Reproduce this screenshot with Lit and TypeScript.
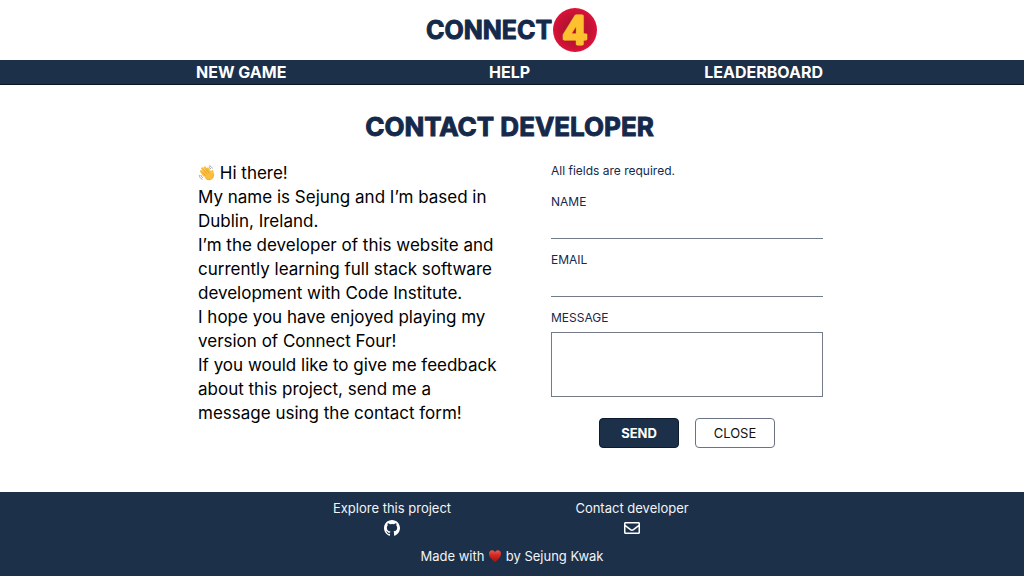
import { LitElement, html, css, svg } from "lit";
import { customElement } from "lit/decorators.js";

const wave = svg`
  <g stroke-linecap="round" stroke-linejoin="round" fill="none">
    <path d="M7 13.2 3.6 8.4M9 11 5 5.2M11.6 9.6 8 4.2M14 9.4 11.4 5.6" stroke="#f9be3c" stroke-width="2.8"/>
    <path d="M5.4 11.6 9.6 7.4 14 9.2 15.4 10.4C15.6 8.6 15.4 7.6 16.4 7.2 17.8 6.8 18.2 8.6 18.4 10.4 18.8 13.4 18.4 15.8 16.4 17.4 14 19.4 11 18.8 9 16.8Z" fill="#f9be3c"/>
    <path d="M8.6 13.6 5.4 9.6M10.4 11.6 7 6.8M12.6 10.4 9.8 6" stroke="#df8f1c" stroke-width=".6"/>
    <path d="M9 16.8C11 18.8 14 19.4 16.4 17.4 18 16 18.5 14.4 18.5 12" stroke="#e89a22" stroke-width=".9"/>
    <path d="M13.4 2.2C15 2.4 16.2 3.4 16.8 4.8M13.2 4.2C14 4.4 14.6 4.8 15 5.6M1.6 13.6C1.8 15.6 3 17.2 4.8 18M3.4 13.4C3.6 14.6 4.4 15.4 5.4 16" stroke="#9a9ea4" stroke-width="1.1"/>
  </g>`;

@customElement("app-root")
export class AppRoot extends LitElement {
  static styles = css`
    :host {
      --navy: #1d3049;
      --ink: #15294b;
      display: flex;
      flex-direction: column;
      min-height: 100vh;
      background: #fff;
      color: #000;
      font-family: Inter, "Open Sans", sans-serif;
      font-size: 17px;
    }
    *, *::before, *::after { box-sizing: border-box; }
    a { color: inherit; text-decoration: none; }
    p, h1 { margin: 0; }
    .header { display: flex; justify-content: center; padding: 8px 0; }
    .logo { display: flex; align-items: center; }
    .logo svg { display: block; overflow: visible; }
    .word, .four { font-family: Inter, sans-serif; stroke-linejoin: round; }
    .word { font-size: 25px; font-weight: 700; fill: var(--ink); stroke: var(--ink); stroke-width: 1px; }
    .four { font-size: 38px; font-weight: 600; fill: #fdc02f; stroke: #fdc02f; stroke-width: 3px; }
    .nav { background: var(--navy); border-bottom: 1px solid #0b1626; color: #fff; }
    .wrap { width: 100%; max-width: 636px; margin: 0 auto; padding: 0 7px 0 2px; }
    .links {
      display: grid;
      grid-template-columns: 1fr 1fr 1fr;
      font-size: 16px;
      font-weight: 700;
      line-height: 24px;
    }
    .links a:nth-child(2) { text-align: center; }
    .links a:nth-child(3) { text-align: right; }
    .main { flex: 1; padding-top: 24px; padding-bottom: 40px; }
    .title {
      color: var(--ink);
      font-size: 26px;
      font-weight: 700;
      line-height: 36px;
      text-align: center;
      -webkit-text-stroke: 1px var(--ink);
      stroke-linejoin: round;
    }
    .columns { display: grid; grid-template-columns: 1fr 272px; gap: 48px; padding-top: 16px; padding-left: 2px; }
    .about { line-height: 24px; }
    .wave { width: 17px; height: 17px; vertical-align: -2px; }
    .form { display: flex; flex-direction: column; color: var(--ink); font-size: 12px; line-height: 20px; }
    .note { margin-bottom: 11px; }
    .form input, .form textarea {
      display: block;
      width: 100%;
      padding: 4px;
      border: 1px solid #737b89;
      border-radius: 0;
      background: #fff;
      font: inherit;
      color: inherit;
      resize: none;
      outline: none;
    }
    .form input { height: 27px; border-width: 0 0 1px; margin-bottom: 11px; }
    .form textarea { height: 65px; margin-top: 4px; }
    .actions { display: flex; justify-content: center; gap: 16px; padding-top: 21px; }
    .btn {
      width: 80px;
      height: 30px;
      padding: 0;
      border: 1px solid #6a7284;
      border-radius: 4px;
      background: #fff;
      color: #111;
      font-family: inherit;
      font-size: 13px;
      cursor: pointer;
    }
    .btn.primary { background: var(--navy); border-color: #0d1b30; color: #fff; font-weight: 700; }
    .footer {
      background: var(--navy);
      color: #f2f4f6;
      font-size: 13px;
      line-height: 20px;
      text-align: center;
      padding: 6px 0 10px;
    }
    .contacts { display: grid; grid-template-columns: 240px 240px; justify-content: center; }
    .contacts a { display: flex; flex-direction: column; align-items: center; }
    .contacts svg { display: block; width: 16px; height: 20px; fill: #fff; }
    .credit { margin-top: 8px; }
    .heart { width: 14px; height: 14px; vertical-align: -2px; }
  `;

  render() {
    return html`
      <header class="header">
        <a class="logo" href="#" aria-label="Connect 4">
          <svg width="170" height="44" viewBox="0 0 170 44">
            <defs>
              <radialGradient id="disc">
                <stop offset="0" stop-color="#a80f2e" />
                <stop offset=".6" stop-color="#bd1233" />
                <stop offset=".82" stop-color="#cc1236" />
                <stop offset="1" stop-color="#de123b" />
              </radialGradient>
            </defs>
            <circle cx="148" cy="22" r="22" fill="url(#disc)" />
            <text class="word" x="-1" y="31">CONNECT</text>
            <text class="four" x="148" y="36" text-anchor="middle">4</text>
          </svg>
        </a>
      </header>
      <nav class="nav">
        <div class="wrap links">
          <a href="#new">NEW GAME</a>
          <a href="#help">HELP</a>
          <a href="#leaderboard">LEADERBOARD</a>
        </div>
      </nav>
      <main class="wrap main">
        <h1 class="title">CONTACT DEVELOPER</h1>
        <div class="columns">
          <section class="about">
            <p><svg class="wave" viewBox="0 0 20 20" role="img" aria-label="Waving hand">${wave}</svg> Hi there!</p>
            <p>My name is Sejung and I’m based in Dublin, Ireland.</p>
            <p>I’m the developer of this website and currently learning full stack software development with Code Institute.</p>
            <p>I hope you have enjoyed playing my version of Connect Four!</p>
            <p>If you would like to give me feedback about this project, send me a message using the contact form!</p>
          </section>
          <form class="form" @submit=${(e: Event) => e.preventDefault()}>
            <p class="note">All fields are required.</p>
            <label for="name">NAME</label>
            <input id="name" type="text" required />
            <label for="email">EMAIL</label>
            <input id="email" type="email" required />
            <label for="message">MESSAGE</label>
            <textarea id="message" required></textarea>
            <div class="actions">
              <button class="btn primary" type="submit">SEND</button>
              <button class="btn" type="button">CLOSE</button>
            </div>
          </form>
        </div>
      </main>
      <footer class="footer">
        <div class="contacts">
          <a href="#project">Explore this project
            <svg viewBox="0 0 496 512">
              <path d="M248 8C111 8 0 119 0 257c0 110 70 203 169 236 13 2 17-6 17-12v-45c-70 15-84-30-84-30-11-29-28-37-28-37-23-16 2-16 2-16 25 2 38 26 38 26 22 38 58 27 73 21 2-16 9-27 16-34-56-6-114-28-114-123 0-27 9-49 25-66-2-6-11-31 3-65 0 0 21-7 69 25a240 240 0 0 1 125 0c48-32 68-25 68-25 14 34 5 59 3 65 16 17 26 39 26 66 0 95-58 116-114 123 9 8 17 23 17 46v69c0 6 4 14 17 12 98-33 168-126 168-236C496 119 385 8 248 8z" />
            </svg>
          </a>
          <a href="#contact">Contact developer
            <svg viewBox="0 0 512 512">
              <path d="M464 64H48C21 64 0 86 0 112v288c0 27 21 48 48 48h416c27 0 48-21 48-48V112c0-26-21-48-48-48zm0 48v41c-22 18-58 47-134 106-17 14-50 46-74 45-24 1-57-31-74-45C106 200 70 171 48 153v-41h416zM48 400V214c23 18 55 44 104 82 22 17 60 56 104 56 44 0 81-38 104-56 49-38 81-64 104-82v186H48z" />
            </svg>
          </a>
        </div>
        <p class="credit">
          Made with
          <svg class="heart" viewBox="0 0 14 14" role="img" aria-label="love">
            <defs>
              <linearGradient id="love" x2="0" y2="1">
                <stop offset="0" stop-color="#ee5a50" />
                <stop offset=".4" stop-color="#d32a22" />
                <stop offset="1" stop-color="#a50f0c" />
              </linearGradient>
            </defs>
            <path fill="url(#love)" d="M7 13.2C4.2 10.8 1 8.2 1 4.8 1 2.8 2.4 1.3 4.1 1.3 5.4 1.3 6.5 2.1 7 3.3 7.5 2.1 8.6 1.3 9.9 1.3 11.6 1.3 13 2.8 13 4.8 13 8.2 9.8 10.8 7 13.2Z" />
          </svg>
          by Sejung Kwak
        </p>
      </footer>
    `;
  }
}
